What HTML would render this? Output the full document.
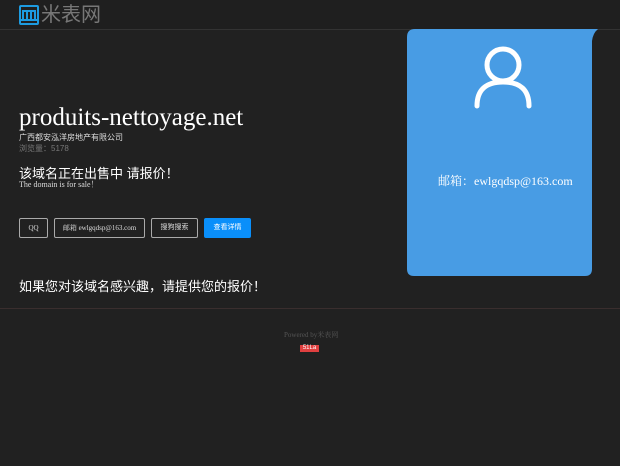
<!DOCTYPE html>
<html><head><meta charset="utf-8"><style>
body{margin:0;width:620px;height:466px;background:#212121;overflow:hidden;position:relative;font-family:"Liberation Serif","Noto Serif CJK SC",serif;color:#eee}
.a{position:absolute;white-space:nowrap}
.s{font-family:"Liberation Sans","Noto Sans CJK SC",sans-serif}
.b{position:absolute;top:218px;height:18px;border:1px solid #aaa;border-radius:2px;font-size:7px;line-height:18px;text-align:center;color:#ddd}
.b span{display:inline-block;vertical-align:top;line-height:18px}
</style></head><body>
<div class="a" style="left:0;top:0;width:620px;height:29px;background:#1f1f1f;border-bottom:1px solid #333"></div>
<svg class="a" style="left:19px;top:5px" width="20" height="20" viewBox="0 0 20 20"><rect x="1" y="1" width="18" height="18" rx="1" fill="none" stroke="#1d9be0" stroke-width="2"/><path d="M4 15V6h12v9M8 6v9M12 6v9M2 15h16" fill="none" stroke="#1d9be0" stroke-width="2"/></svg>
<div class="a s" style="left:41px;top:3px;font-size:20px;color:#777;line-height:24px">米表网</div>
<div class="a" style="left:19px;top:103px;font-size:25px;color:#fff;line-height:30px">produits-nettoyage.net</div>
<div class="a s" style="left:19px;top:132px;font-size:8px;color:#ddd">广西都安泓洋房地产有限公司</div>
<div class="a s" style="left:19px;top:143px;font-size:8px;color:#777">浏览量：5178</div>
<div class="a s" style="left:19px;top:163px;font-size:13px;color:#fff">该域名正在出售中 请报价！</div>
<div class="a" style="left:19px;top:179px;font-size:8px;color:#ddd">The domain is for sale！</div>
<div class="b" style="left:19px;width:27px"><span>QQ</span></div>
<div class="b" style="left:54px;width:89px"><span>邮箱 ewlgqdsp@163.com</span></div>
<div class="b s" style="left:151px;width:45px"><span>搜狗搜索</span></div>
<div class="b s" style="left:204px;width:45px;border-color:#0a8ffa;background:#0a8ffa;color:#fff"><span>查看详情</span></div>
<div class="a s" style="left:19px;top:276px;font-size:13px;color:#fff">如果您对该域名感兴趣，请提供您的报价！</div>
<div class="a" style="left:0;top:308px;width:620px;height:1px;background:#3a2e2e"></div>
<div class="a" style="left:284px;top:330px;font-size:7px;color:#555">Powered by米表网</div>
<div class="a s" style="left:300px;top:345px;width:19px;height:7px;background:#e04040;font-size:6px;line-height:7px;color:#fff;text-align:center">51La</div>
<svg class="a" style="left:407px;top:29px" width="194" height="248" viewBox="0 0 194 248"><path d="M8 0H191Q186 4 185 12V240Q185 247 178 247H7Q0 247 0 240V8Q0 0 8 0Z" fill="#489ce4"/><circle cx="96" cy="36" r="16" fill="none" stroke="#fff" stroke-width="5"/><path d="M70 77Q70 53 96 53Q122 53 122 77" fill="none" stroke="#fff" stroke-width="5" stroke-linecap="round"/></svg>
<div class="a" style="left:438px;top:172px;font-size:12px;color:#fff">邮箱：ewlgqdsp@163.com</div>
</body></html>
